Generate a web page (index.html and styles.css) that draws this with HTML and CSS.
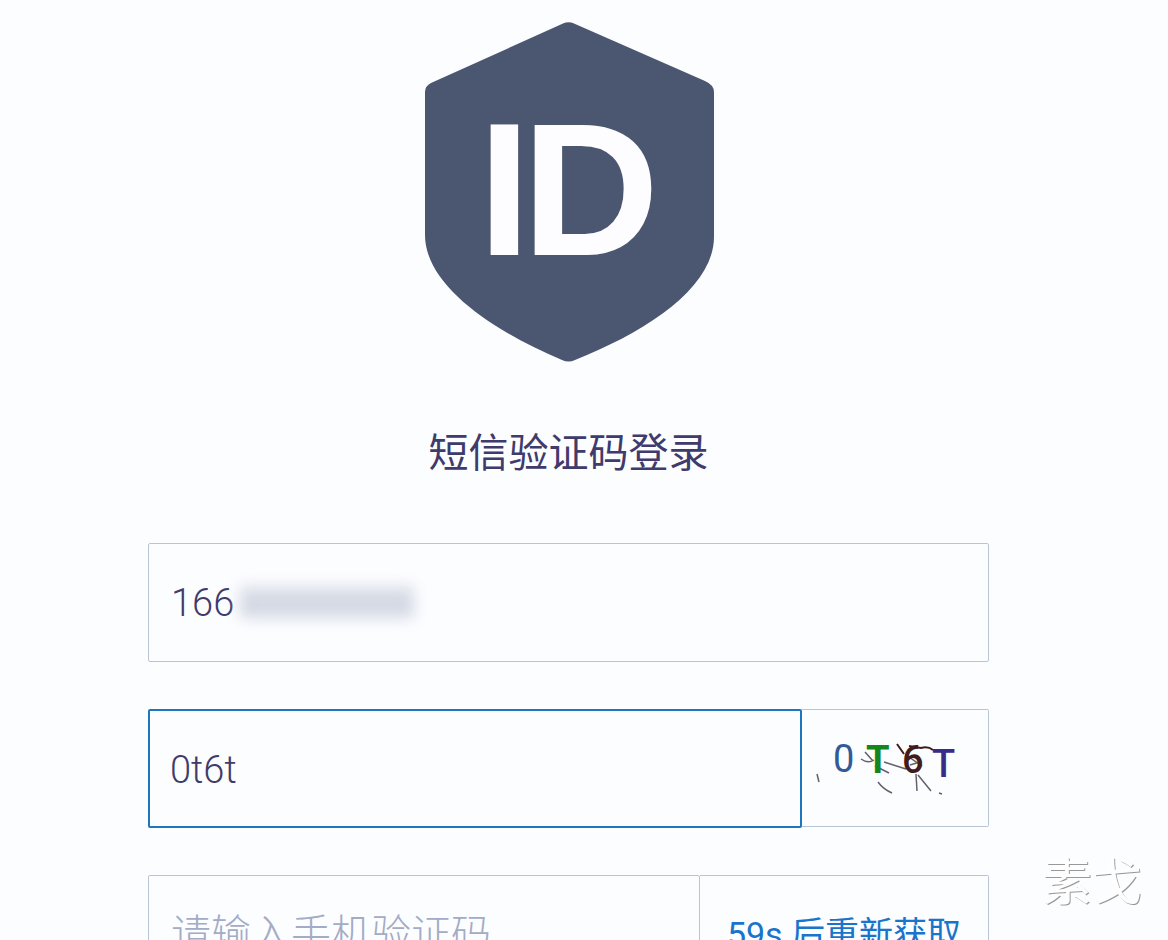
FILE: index.html
```html
<!DOCTYPE html>
<html lang="zh-CN">
<head>
<meta charset="utf-8">
<meta name="viewport" content="width=device-width, initial-scale=1">
<title>短信验证码登录</title>
<link rel="stylesheet" href="styles.css">
</head>
<body>
<main class="login">
  <svg class="logo" viewBox="0 0 290 340" role="img" aria-label="ID">
    <path class="shield" d="M139 1.500Q144.500-1 150 1.500L281 59Q290 63 290 70V215C290 265 224 309 151 338Q144.500 341 138 338C65 307 1 262 1 213V70Q1 64 7 61Z"/>
    <text class="logo-text" y="233"><tspan x="54">I</tspan><tspan x="98">D</tspan></text>
  </svg>
  <h1 class="title">短信验证码登录</h1>
  <form class="form">
    <div class="row">
      <input class="field" type="text" value="166" aria-label="手机号">
      <span class="mask" aria-hidden="true"></span>
    </div>
    <div class="row">
      <input class="field field-active" type="text" value="0t6t" aria-label="图形验证码">
      <button class="captcha" type="button" aria-label="刷新图形验证码">
        <svg class="captcha-image" viewBox="0 0 186 116">
          <g class="noise">
            <path d="M15 64l2 8M59 49q7 5 13 1M63 42l8 9M73 56l14 7M76 72q5 7 14 11M82 52l22 7M114 64l1 17M116 65l13 16M137 83l3 1M104 45l16 11M108 55l10-3"/>
          </g>
          <text class="glyph glyph-blue" x="31" y="62">0</text>
          <text class="glyph glyph-green" x="64" y="63">T</text>
          <text class="glyph glyph-brown" x="100" y="63">6</text>
          <text class="glyph glyph-violet" x="130" y="67">T</text>
          <path class="stroke-thin" d="M95 34l7 10M107 36l12 2q7-2 12 2"/>
        </svg>
      </button>
    </div>
    <div class="row">
      <input class="field field-code" type="text" placeholder="请输入手机验证码" aria-label="手机验证码">
      <button class="resend" type="button">59s 后重新获取</button>
    </div>
  </form>
</main>
<div class="watermark">素戈</div>
</body>
</html>
```
FILE: styles.css
```css
* {
  box-sizing: border-box;
}

body {
  margin: 0;
  height: 100vh;
  overflow: hidden;
  position: relative;
  background: #fcfdff;
  color: #3f3b6c;
  font-family: Roboto, "Noto Sans CJK SC", sans-serif;
}

.login {
  display: flex;
  flex-direction: column;
  align-items: center;
  padding: 22px 179px 0 148px;
}

.logo {
  display: block;
  width: 290px;
}

.shield {
  fill: #4b5771;
}

.logo-text {
  fill: #fdfdff;
  font: bold 190px "Liberation Sans", sans-serif;
}

.title {
  margin: 62px 0 59px;
  font-size: 40px;
  line-height: 60px;
  font-weight: 400;
}

.form {
  display: flex;
  flex-direction: column;
  gap: 47px;
  width: 100%;
}

.row {
  display: flex;
  position: relative;
  height: 119px;
}

.field {
  flex: 1;
  min-width: 0;
  padding: 0 22px;
  border: 1px solid #b9c5d5;
  border-radius: 2px;
  outline: 0;
  background: transparent;
  color: #3f3b6c;
  font-family: Roboto, "Noto Sans CJK SC", sans-serif;
  font-size: 38px;
  font-weight: 300;
}

.field-active {
  padding: 2px 20px 0;
  border: 2px solid #1f76bd;
}

.field-code {
  font-size: 40px;
}

.field::placeholder {
  color: #a3abc6;
  opacity: 1;
}

.mask {
  position: absolute;
  left: 92px;
  top: 42px;
  width: 174px;
  height: 34px;
  background: linear-gradient(#e3e6ee, #d0d5e1 60%, #dfe2eb);
  filter: blur(7px);
}

.captcha,
.resend {
  padding: 0;
  border: 1px solid #b9c5d5;
  border-left: 0;
  border-radius: 0 2px 2px 0;
  background: transparent;
}

.captcha {
  align-self: flex-start;
  width: 187px;
}

.captcha-image {
  display: block;
  width: 100%;
}

.noise {
  fill: none;
  stroke: #65606b;
  stroke-width: 1.5;
}

.glyph {
  font: 400 38px Roboto, sans-serif;
}

.glyph-blue {
  fill: #315b96;
}

.glyph-green {
  fill: #14861c;
  font-weight: 700;
}

.glyph-brown {
  fill: #421b1b;
  font-weight: 500;
}

.glyph-violet {
  fill: #392b8c;
  font-weight: 500;
}

.stroke-thin {
  fill: none;
  stroke: #421b1b;
  stroke-width: 2;
}

.resend {
  width: 289px;
  padding-bottom: 6px;
  color: #1974cb;
  font-family: Roboto, "Noto Sans CJK SC", sans-serif;
  font-size: 34px;
}

.watermark {
  position: absolute;
  right: 26px;
  bottom: 32px;
  color: #fefeff;
  font: 50px/60px "Noto Sans CJK SC", sans-serif;
  text-shadow: 1px 1px 0 #999;
}
```
